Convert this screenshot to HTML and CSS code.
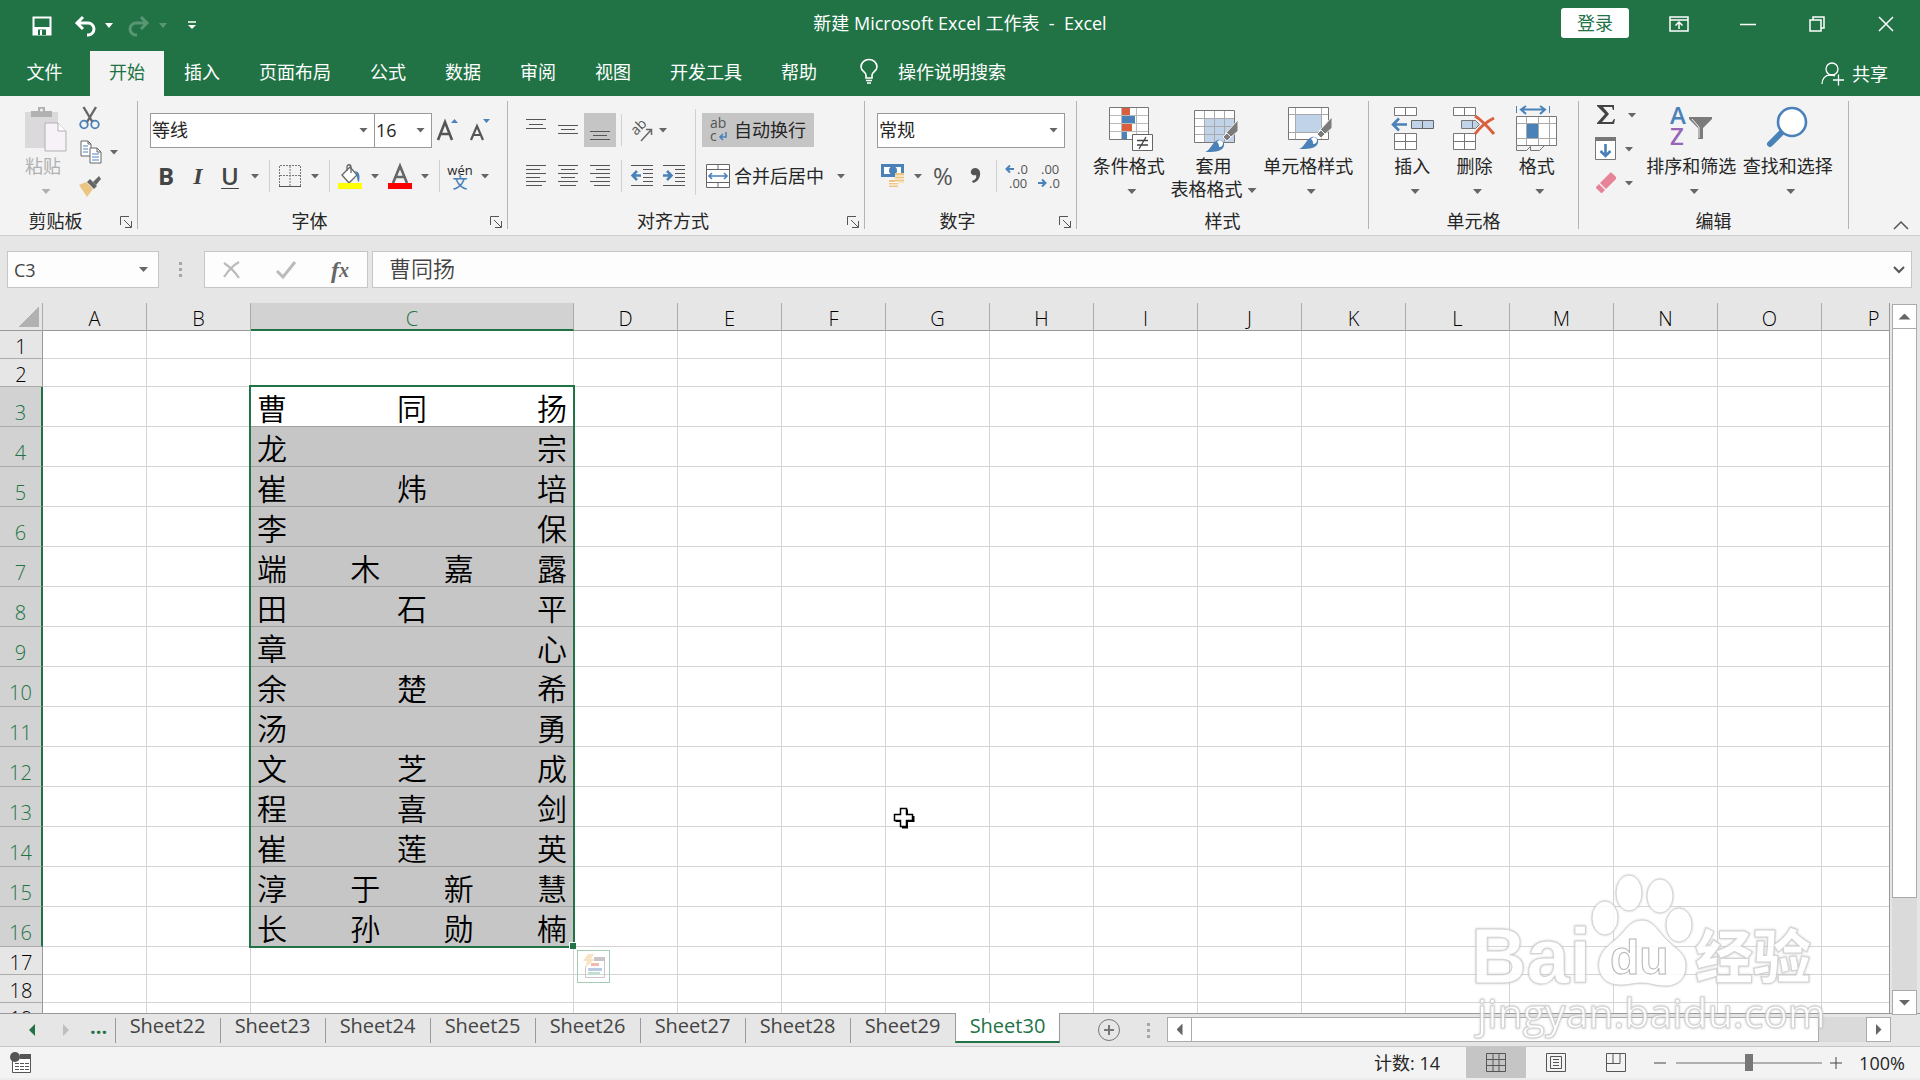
FILE: index.html
```
<!DOCTYPE html>
<html lang="zh-CN">
<head>
  <meta charset="UTF-8">
  <meta name="viewport" content="width=device-width, initial-scale=1.0">
  <title>新建 Microsoft Excel 工作表 - Excel</title>
  <link rel="stylesheet" href="styles.css">
</head>
<body>
  <header class="titlebar">
    <div class="quick">
      <button class="quick-save" aria-label="保存"><svg width="20" height="20" viewBox="0 0 20 20"><path d="M1.500 1.500h17v17h-17z" fill="none" stroke="#fff" stroke-width="2"/><path d="M1 11h18v8H1z" fill="#fff"/><path d="M6 13.500h8V19H6z" fill="#217346"/><path d="M8 14h2v5H8z" fill="#fff"/></svg></button>
      <button class="quick-undo" aria-label="撤消"><svg width="24" height="22" viewBox="0 0 24 22"><path d="M10 2L4 8l6 6M4 8h11a6 6 0 0 1 0 12h-1" fill="none" stroke="#fff" stroke-width="3"/></svg><i class="caret white"></i></button>
      <button class="quick-undo faded" aria-label="恢复"><svg width="24" height="22" viewBox="0 0 24 22"><path d="M14 2l6 6-6 6M20 8H9a6 6 0 0 0 0 12h1" fill="none" stroke="#fff" stroke-width="3"/></svg><i class="caret white"></i></button>
      <button class="quick-more" aria-label="自定义快速访问工具栏"><svg width="8" height="9" viewBox="0 0 8 9"><path d="M0 1h8" stroke="#fff" stroke-width="1.500"/><path d="M0 4h8L4 8z" fill="#fff"/></svg></button>
    </div>
    <div class="title">新建 Microsoft Excel 工作表&nbsp; -&nbsp; Excel</div>
    <div class="window-buttons">
      <button class="login">登录</button>
      <button class="win" aria-label="功能区显示选项"><svg width="20" height="16" viewBox="0 0 20 16"><path d="M1 1h18v14H1zM1 4h18M10 13V6M6.500 9.500L10 6l3.500 3.500" fill="none" stroke="#fff" stroke-width="1.500"/></svg></button>
      <button class="win" aria-label="最小化"><svg width="16" height="16" viewBox="0 0 16 16"><path d="M0 8.500h16" stroke="#fff" stroke-width="1.500"/></svg></button>
      <button class="win" aria-label="向下还原"><svg width="16" height="16" viewBox="0 0 16 16"><path d="M1 4h11v11H1zM4 4V1h11v11h-3" fill="none" stroke="#fff" stroke-width="1.500"/></svg></button>
      <button class="win" aria-label="关闭"><svg width="16" height="16" viewBox="0 0 16 16"><path d="M1 1l14 14M15 1L1 15" stroke="#fff" stroke-width="1.500"/></svg></button>
    </div>
  </header>

  <nav class="tabs">
    <button class="tab file">文件</button>
    <button class="tab active">开始</button>
    <button class="tab">插入</button>
    <button class="tab">页面布局</button>
    <button class="tab">公式</button>
    <button class="tab">数据</button>
    <button class="tab">审阅</button>
    <button class="tab">视图</button>
    <button class="tab">开发工具</button>
    <button class="tab">帮助</button>
    <button class="tab tell-me"><svg width="18" height="25" viewBox="0 0 18 25"><path d="M6 19v-3C6 13 1 12 1 8a8 7.500 0 0 1 16 0c0 4-5 5-5 8v3zM6 21.500h6M7 24h4" fill="none" stroke="#fff" stroke-width="1.600"/></svg>操作说明搜索</button>
    <button class="share"><svg width="24" height="24" viewBox="0 0 24 24"><circle cx="11" cy="7" r="6" fill="none" stroke="#fff" stroke-width="1.300"/><path d="M1 22c0-5 3-9 8-9 2 0 4 0 5 1M12 18h11M17.500 12.500v11" fill="none" stroke="#fff" stroke-width="1.300"/></svg>共享</button>
  </nav>

  <section class="ribbon">
    <div class="group clipboard">
      <div class="group-body">
        <button class="big paste"><svg width="42" height="46" viewBox="0 0 42 46"><path d="M0 6h33v36H0z" fill="#dcd9dc"/><path d="M6 11V5h7V1h7v4h7v6z" fill="#b1b1b1"/><circle cx="16.500" cy="4" r="1.500" fill="#f3f3f3"/><path d="M20 17h13l8 8v20H20z" fill="#f6f2f8" stroke="#b1b1b1"/><path d="M33 17v8h8" fill="#fff" stroke="#b1b1b1"/></svg><span>粘贴</span><i class="caret"></i></button>
        <div class="stack">
          <button class="tool" aria-label="剪切"><svg width="22" height="24" viewBox="0 0 22 24"><path d="M4.500 1l9 15M17 1L8 16" stroke="#666" stroke-width="2.400"/><circle cx="5" cy="18.500" r="3.800" fill="none" stroke="#4a81b8" stroke-width="1.800"/><circle cx="16" cy="18.500" r="3.800" fill="none" stroke="#4a81b8" stroke-width="1.800"/></svg></button>
          <button class="tool with-caret" aria-label="复制"><svg width="22" height="24" viewBox="0 0 22 24"><path d="M1 1h7l3 3v12H1zM8 1v3h3" fill="#fff" stroke="#666"/><path d="M3 6h5M3 9h5M3 12h5" stroke="#4a81b8"/><path d="M10 8h7l4 4v11H10zM17 8v4h4" fill="#fff" stroke="#666"/><path d="M12 14h7M12 17h7M12 20h7" stroke="#4a81b8"/></svg><i class="caret"></i></button>
          <button class="tool" aria-label="格式刷"><svg width="24" height="24" viewBox="0 0 24 24"><path d="M1 11l7-3 7 7-6 8z" fill="#ecc583"/><path d="M9 8l3-3 7 7-3 3z" fill="#666"/><path d="M15 8l6-6 2 3-5 6z" fill="#666"/></svg></button>
        </div>
      </div>
      <div class="group-name"><span>剪贴板</span><button class="launcher" aria-label="剪贴板设置"><svg width="12" height="12" viewBox="0 0 12 12"><path d="M.500 9V.500H9M4 4l7 7M11.500 5v6.500H5" fill="none" stroke="#555"/></svg></button></div>
    </div>

    <div class="group font">
      <div class="group-body rows">
        <div class="row">
          <label class="combo font-name"><select aria-label="字体"><option>等线</option></select><i class="caret"></i></label>
          <label class="combo font-size"><select aria-label="字号"><option>16</option></select><i class="caret"></i></label>
          <button class="tool" aria-label="增大字号"><svg width="24" height="24" viewBox="0 0 24 24"><path d="M2 22L9 4l7 18M4.500 16h9" fill="none" stroke="#555" stroke-width="2.600"/><path d="M15 5h7l-3.500-4z" fill="#4a81b8"/></svg></button>
          <button class="tool" aria-label="减小字号"><svg width="24" height="24" viewBox="0 0 24 24"><path d="M3 22L9 8l6 14M5 17h8" fill="none" stroke="#555" stroke-width="2.200"/><path d="M15 1h7l-3.500 4z" fill="#4a81b8"/></svg></button>
        </div>
        <div class="row">
          <button class="tool glyph bold">B</button>
          <button class="tool glyph italic">I</button>
          <button class="tool glyph under">U</button><button class="drop" aria-label="下划线选项"><i class="caret"></i></button>
          <i class="sep"></i>
          <button class="tool" aria-label="边框"><svg width="22" height="22" viewBox="0 0 22 22"><path d="M1 .500h20M.500 1v20M21.500 1v20M11 1v20M1 10.500h20" fill="none" stroke="#777" stroke-dasharray="2 1"/><path d="M0 21.500h22" stroke="#555"/></svg></button><button class="drop" aria-label="边框选项"><i class="caret"></i></button>
          <i class="sep"></i>
          <button class="tool" aria-label="填充颜色"><svg width="24" height="25" viewBox="0 0 24 25"><path d="M4 11l8-8 7 8-8 8z" fill="#fff" stroke="#666" stroke-width="1.300"/><path d="M9 7V3c0-3 4-3 4 0v6" fill="none" stroke="#666" stroke-width="1.300"/><path d="M17 7c5 1 5 5 4 11-2-1-2-4-2-7z" fill="#4a81b8"/><path d="M0 19h24v6H0z" fill="#ff0"/></svg></button><button class="drop" aria-label="填充颜色选项"><i class="caret"></i></button>
          <button class="tool" aria-label="字体颜色"><svg width="24" height="25" viewBox="0 0 24 25"><path d="M5 19l7-17 7 17M7.500 13h9" fill="none" stroke="#666" stroke-width="2.600"/><path d="M0 19h24v6H0z" fill="red"/></svg></button><button class="drop" aria-label="字体颜色选项"><i class="caret"></i></button>
          <i class="sep"></i>
          <button class="tool phonetic"><span>wén</span><b>文</b></button><button class="drop" aria-label="拼音选项"><i class="caret"></i></button>
        </div>
      </div>
      <div class="group-name"><span>字体</span><button class="launcher" aria-label="字体设置"><svg width="12" height="12" viewBox="0 0 12 12"><path d="M.500 9V.500H9M4 4l7 7M11.500 5v6.500H5" fill="none" stroke="#555"/></svg></button></div>
    </div>

    <div class="group align">
      <div class="group-body">
        <div class="rows">
          <div class="row">
            <button class="tool" aria-label="顶端对齐"><svg width="20" height="24" viewBox="0 0 20 24"><path d="M0 1.500h20M3 6.500h14M0 10.500h20" stroke="#555"/></svg></button>
            <button class="tool" aria-label="垂直居中"><svg width="20" height="24" viewBox="0 0 20 24"><path d="M0 7.500h20M3 11.500h14M0 15.500h20" stroke="#555"/></svg></button>
            <button class="tool pressed" aria-label="底端对齐"><svg width="20" height="24" viewBox="0 0 20 24"><path d="M0 13.500h20M3 17.500h14M0 21.500h20" stroke="#555"/></svg></button>
            <i class="sep"></i>
            <button class="tool" aria-label="方向"><svg width="24" height="24" viewBox="0 0 24 24"><text x="6" y="18" transform="rotate(-45 6 18)" class="svg-text" font-size="14">ab</text><path d="M11 23L21 12M16 11.500h5.500V17" fill="none" stroke="#666" stroke-width="1.500"/></svg></button><button class="drop near" aria-label="方向选项"><i class="caret"></i></button>
          </div>
          <div class="row">
            <button class="tool" aria-label="左对齐"><svg width="20" height="22" viewBox="0 0 20 22"><path d="M0 .500h20M0 4.500h14M0 8.500h20M0 12.500h14M0 16.500h20M0 20.500h16" stroke="#555"/></svg></button>
            <button class="tool" aria-label="居中"><svg width="20" height="22" viewBox="0 0 20 22"><path d="M0 .500h20M3 4.500h14M0 8.500h20M3 12.500h14M0 16.500h20M2 20.500h16" stroke="#555"/></svg></button>
            <button class="tool" aria-label="右对齐"><svg width="20" height="22" viewBox="0 0 20 22"><path d="M0 .500h20M6 4.500h14M0 8.500h20M6 12.500h14M0 16.500h20M4 20.500h16" stroke="#555"/></svg></button>
            <i class="sep"></i>
            <button class="tool" aria-label="减少缩进量"><svg width="22" height="22" viewBox="0 0 22 22"><path d="M0 .500h22M12 4.500h10M12 8.500h10M12 12.500h10M12 16.500h10M0 20.500h22" stroke="#555"/><path d="M10 10.500H2M6 6l-4.500 4.500L6 15" fill="none" stroke="#4a81b8" stroke-width="2.500"/></svg></button>
            <button class="tool" aria-label="增加缩进量"><svg width="22" height="22" viewBox="0 0 22 22"><path d="M0 .500h22M12 4.500h10M12 8.500h10M12 12.500h10M12 16.500h10M0 20.500h22" stroke="#555"/><path d="M0 10.500h8M4 6l4.500 4.500L4 15" fill="none" stroke="#4a81b8" stroke-width="2.500"/></svg></button>
          </div>
        </div>
        <i class="sep tall"></i>
        <div class="rows">
          <div class="row">
            <button class="wide pressed"><svg width="24" height="26" viewBox="0 0 24 26"><text x="4" y="11" class="svg-text" font-size="14">ab</text><text x="4" y="24" class="svg-text" font-size="14">c</text><path d="M20 15v5h-6M17 17l-3 3 3 3" fill="none" stroke="#4a81b8" stroke-width="1.600"/></svg>自动换行</button>
          </div>
          <div class="row">
            <button class="wide"><svg width="24" height="24" viewBox="0 0 24 24"><path d="M.500 .500h23v23H.500z" fill="#fff" stroke="#666"/><path d="M0 5.500h24M0 18.500h24M12 0v5M12 19v5" stroke="#666"/><path d="M3 12h18M6 9l-3 3 3 3M18 9l3 3-3 3" fill="none" stroke="#4a81b8" stroke-width="1.600"/></svg>合并后居中</button><button class="drop" aria-label="合并选项"><i class="caret"></i></button>
          </div>
        </div>
      </div>
      <div class="group-name"><span>对齐方式</span><button class="launcher" aria-label="对齐设置"><svg width="12" height="12" viewBox="0 0 12 12"><path d="M.500 9V.500H9M4 4l7 7M11.500 5v6.500H5" fill="none" stroke="#555"/></svg></button></div>
    </div>

    <div class="group number">
      <div class="group-body rows">
        <div class="row">
          <label class="combo format"><select aria-label="数字格式"><option>常规</option></select><i class="caret"></i></label>
        </div>
        <div class="row">
          <button class="tool" aria-label="会计数字格式"><svg width="24" height="24" viewBox="0 0 24 24"><path d="M0 0h23v13H0z" fill="#4a81b8"/><path d="M3 3h17v7H3z" fill="#fff"/><circle cx="12" cy="6.500" r="4" fill="#4a81b8"/><path d="M14 9h9v10h-9zM8 16h9v7H8z" fill="#ecc583"/><path d="M14 12h9M14 15h9M14 18h9M8 18.500h9M8 21h9" stroke="#fff"/></svg></button><button class="drop" aria-label="会计格式选项"><i class="caret"></i></button>
          <button class="tool glyph percent">%</button>
          <button class="tool" aria-label="千位分隔样式"><svg width="12" height="18" viewBox="0 0 12 18"><path d="M3 14c3-1 5-3 4-6-3 1-6-1-5-4 1-4 8-4 9 1 1 6-3 10-7 11z" fill="#555"/></svg></button>
          <i class="sep"></i>
          <button class="tool" aria-label="增加小数位数"><svg width="24" height="26" viewBox="0 0 24 26"><text x="12" y="11" class="svg-text" font-size="13">.0</text><text x="4" y="25" class="svg-text" font-size="13">.00</text><path d="M9 6H2M5 2.500L1.500 6 5 9.500" fill="none" stroke="#4a81b8" stroke-width="2"/></svg></button>
          <button class="tool" aria-label="减少小数位数"><svg width="24" height="26" viewBox="0 0 24 26"><text x="4" y="11" class="svg-text" font-size="13">.00</text><text x="12" y="25" class="svg-text" font-size="13">.0</text><path d="M1 20h7M5 16.500L8.500 20 5 23.500" fill="none" stroke="#4a81b8" stroke-width="2"/></svg></button>
        </div>
      </div>
      <div class="group-name"><span>数字</span><button class="launcher" aria-label="数字设置"><svg width="12" height="12" viewBox="0 0 12 12"><path d="M.500 9V.500H9M4 4l7 7M11.500 5v6.500H5" fill="none" stroke="#555"/></svg></button></div>
    </div>

    <div class="group styles">
      <div class="group-body">
        <button class="big"><svg width="46" height="46" viewBox="0 0 46 46"><path d="M1.500 1.500h39v32h-39z" fill="#fff" stroke="#777"/><path d="M2 9.500h38M2 17.500h38M2 25.500h38M13.500 2v31M28.500 2v31" stroke="#bbb"/><path d="M14 2h8v7h-8zM14 18h10v7H14z" fill="#d9603f"/><path d="M14 10h13v7H14zM14 26h5v7h-5z" fill="#4a81b8"/><path d="M24.500 28.500h20v16h-20z" fill="#fff" stroke="#666"/><path d="M29 34.500h11M29 39h11M38 31l-7 12" stroke="#444" stroke-width="1.300"/></svg><span>条件格式</span><i class="caret"></i></button>
        <button class="big table-format"><svg width="46" height="46" viewBox="0 0 46 46"><path d="M1.500 4.500h40v32h-40z" fill="#fff" stroke="#777"/><path d="M12 13h29v23H12z" fill="#c1d3e8"/><path d="M2 12.500h39M2 20.500h39M2 28.500h39M11.500 5v31M21.500 5v31M31.500 5v31" stroke="#aaa"/><path d="M45 14v11l-8 7-5-4z" fill="#7b7b7b" stroke="#f3f3f3"/><path d="M34 27l4 4-4 4-4-4z" fill="#7b7b7b" stroke="#f3f3f3"/><path d="M12 46c5-1 7-10 13-12 5-1 8 4 5 8-3 4-10 4-18 4z" fill="#4a81b8"/><path d="M24 36c2-3 6-2 6 1s-2 4-4 4c0-2 0-3-2-5z" fill="#fff"/></svg><span>套用</span><span class="second-line">表格格式<i class="caret"></i></span></button>
        <button class="big cell-style"><svg width="46" height="46" viewBox="0 0 46 46"><path d="M1.500 1.500h40v32h-40z" fill="#fff" stroke="#777"/><path d="M2 8.500h39M2 26.500h39M8.500 2v31M34.500 2v31" stroke="#aaa"/><path d="M9 9h25v17H9z" fill="#c1d3e8"/><path d="M45 11v11l-8 7-5-4z" fill="#7b7b7b" stroke="#f3f3f3"/><path d="M34 24l4 4-4 4-4-4z" fill="#7b7b7b" stroke="#f3f3f3"/><path d="M12 43c5-1 7-10 13-12 5-1 8 4 5 8-3 4-10 4-18 4z" fill="#4a81b8"/><path d="M24 33c2-3 6-2 6 1s-2 4-4 4c0-2 0-3-2-5z" fill="#fff"/></svg><span>单元格样式</span><i class="caret"></i></button>
      </div>
      <div class="group-name"><span>样式</span></div>
    </div>

    <div class="group cells">
      <div class="group-body">
        <button class="big"><svg width="44" height="46" viewBox="0 0 44 46"><path d="M4.500 1.500h22v8h-22zM15.500 1v8M4.500 27.500h22v16h-22zM15.500 27v16M4 35.500h22" fill="#fff" stroke="#777"/><path d="M21.500 14.500h22v8h-22zM32.500 14v8" fill="#c1d3e8" stroke="#666"/><path d="M17 18.500H3M9 12.500l-6 6 6 6" fill="none" stroke="#4a81b8" stroke-width="2.600"/></svg><span>插入</span><i class="caret"></i></button>
        <button class="big"><svg width="44" height="46" viewBox="0 0 44 46"><path d="M1.500 1.500h22v8h-22zM12.500 1v8M1.500 27.500h22v16h-22zM12.500 27v16M1 35.500h22" fill="#fff" stroke="#777"/><path d="M9.500 14.500h14l4 4-4 4h-14zM20.500 14v8" fill="#c1d3e8" stroke="#777"/><path d="M23 10c7 4 13 11 19 18M42 12c-8 4-14 9-19 16" fill="none" stroke="#d9603f" stroke-width="3"/></svg><span>删除</span><i class="caret"></i></button>
        <button class="big"><svg width="44" height="46" viewBox="0 0 44 46"><path d="M1.500 0v7M34.500 0v7" stroke="#4a81b8"/><path d="M6 3.500h24M11 0L6 3.500 11 8M25 0l5 3.500L25 8" fill="none" stroke="#4a81b8" stroke-width="2"/><path d="M1.500 10.500h40v29h-40z" fill="#fff" stroke="#777"/><path d="M2 17.500h39M2 32.500h39M11.500 11v28M23.500 11v28M34.500 11v28" stroke="#aaa"/><path d="M12 18h11v14H12z" fill="#4a81b8"/><path d="M1.500 40v4.500h10l4-4v4h9l5-5" fill="none" stroke="#777"/></svg><span>格式</span><i class="caret"></i></button>
      </div>
      <div class="group-name"><span>单元格</span></div>
    </div>

    <div class="group edit">
      <div class="group-body">
        <div class="stack">
          <button class="tool with-caret sum" aria-label="自动求和"><svg width="20" height="22" viewBox="0 0 20 22"><path d="M1 1h17v5h-1l-1-3H7l6 7-7 8h10l2-3h1l-1 5H1v-1l8-9-8-8z" fill="#444"/></svg><i class="caret"></i></button>
          <button class="tool with-caret" aria-label="填充"><svg width="22" height="24" viewBox="0 0 22 24"><path d="M.500 .500h20v22H.500z" fill="#fff" stroke="#777"/><path d="M0 0h21v4H0z" fill="#777"/><path d="M10.500 7v12M5.500 14l5 5 5-5" fill="none" stroke="#4a81b8" stroke-width="2.600"/></svg><i class="caret"></i></button>
          <button class="tool with-caret" aria-label="清除"><svg width="22" height="22" viewBox="0 0 22 22"><path d="M5 11L15 1c1-1 2 0 2 0l4 4v2L11 17z" fill="#e68397"/><path d="M4 12l6 6-3 3H6l-5-5v-1z" fill="#e68397"/></svg><i class="caret"></i></button>
        </div>
        <button class="big"><svg width="44" height="46" viewBox="0 0 44 46"><text x="1" y="18" fill="#4a81b8" class="az">A</text><text x="1" y="39" fill="#9765b8" class="az">Z</text><path d="M20 11h23v2L34 22v11h-5V22l-9-9z" fill="#7b7b7b"/><path d="M23 13l7 8v11" fill="none" stroke="#f3f3f3"/></svg><span>排序和筛选</span><i class="caret"></i></button>
        <button class="big"><svg width="44" height="46" viewBox="0 0 44 46"><path d="M15 27L4 38" stroke="#4a81b8" stroke-width="6" stroke-linecap="round"/><circle cx="26" cy="16" r="14" fill="#fff" stroke="#4a81b8" stroke-width="2.600"/></svg><span>查找和选择</span><i class="caret"></i></button>
      </div>
      <div class="group-name"><span>编辑</span></div>
    </div>
    <button class="collapse" aria-label="折叠功能区"><svg width="16" height="10" viewBox="0 0 16 10"><path d="M1 9l7-7 7 7" fill="none" stroke="#555" stroke-width="1.500"/></svg></button>
  </section>

  <section class="formula-bar">
    <div class="name-box"><input aria-label="名称框" value="C3"><i class="caret"></i></div>
    <i class="dots"></i>
    <div class="formula-buttons">
      <button aria-label="取消"><svg width="20" height="18" viewBox="0 0 20 18"><path d="M2 2c6 4 11 9 15 15M17 1C10 5 6 10 2 16" fill="none" stroke="#bbb" stroke-width="2.200"/></svg></button>
      <button aria-label="输入"><svg width="20" height="18" viewBox="0 0 20 18"><path d="M1 10l6 6L19 1" fill="none" stroke="#bbb" stroke-width="3"/></svg></button>
      <button class="fx">f<small>x</small></button>
    </div>
    <div class="formula"><input aria-label="编辑栏" value="曹同扬"><svg width="12" height="8" viewBox="0 0 12 8"><path d="M1 1l5 5 5-5" fill="none" stroke="#555" stroke-width="2"/></svg></div>
  </section>

  <main class="workspace">
    <div class="sheet">
      <table class="grid">
        <thead><tr id="columns"></tr></thead>
        <tbody id="rows"></tbody>
      </table>
      <svg class="pointer" width="22" height="22" viewBox="0 0 22 22"><path d="M9 2.500h6V9h6.500v6H15v6.500H9V15H2.500V9H9z" fill="#000"/><path d="M7.500 1.500h6v6h6v6h-6v6h-6v-6h-6v-6h6z" fill="#fff" stroke="#000" stroke-width="1.500"/></svg>
    </div>
    <div class="vscroll">
      <button aria-label="向上滚动"><i class="arrow up"></i></button>
      <div class="thumb"></div>
      <div class="track"></div>
      <button aria-label="向下滚动"><i class="arrow down"></i></button>
    </div>
  </main>

  <footer>
    <div class="sheet-bar">
      <div class="sheet-nav"><button aria-label="上一个"><i class="arrow left"></i></button><button aria-label="下一个"><i class="arrow right faint"></i></button><button class="more">...</button></div>
      <button class="sheet-tab">Sheet22</button>
      <button class="sheet-tab">Sheet23</button>
      <button class="sheet-tab">Sheet24</button>
      <button class="sheet-tab">Sheet25</button>
      <button class="sheet-tab">Sheet26</button>
      <button class="sheet-tab">Sheet27</button>
      <button class="sheet-tab">Sheet28</button>
      <button class="sheet-tab">Sheet29</button>
      <button class="sheet-tab current">Sheet30</button>
      <button class="add-sheet" aria-label="新工作表"><svg width="24" height="24" viewBox="0 0 24 24"><circle cx="12" cy="12" r="10.500" fill="none" stroke="#777"/><path d="M7 12h10M12 7v10" stroke="#777" stroke-width="2"/></svg></button>
      <i class="dots"></i>
      <div class="hscroll">
        <button aria-label="向左滚动"><i class="arrow left"></i></button>
        <div class="thumb"></div>
        <div class="track"></div>
        <button aria-label="向右滚动"><i class="arrow right"></i></button>
      </div>
    </div>
    <div class="status-bar">
      <button class="record" aria-label="录制宏"><svg width="22" height="22" viewBox="0 0 22 22"><path d="M2.500 8v12.500h18V3" fill="#fff" stroke="#555"/><path d="M10 2h11v5H10z" fill="#555"/><circle cx="5" cy="5" r="5" fill="#555"/><path d="M5 11.500h14M5 14.500h14M5 17.500h14" stroke="#555" stroke-dasharray="4 1"/></svg></button>
      <span class="count">计数: 14</span>
      <button class="view pressed" aria-label="普通"><svg width="20" height="20" viewBox="0 0 20 20"><path d="M.500 .500h19v18H.500zM7 0v19M13 0v19M0 6.500h20M0 12.500h20" fill="none" stroke="#555"/></svg></button>
      <button class="view" aria-label="页面布局"><svg width="20" height="20" viewBox="0 0 20 20"><path d="M.500 .500h19v18H.500zM4.500 3.500h11v12h-11zM7 6.500h6M7 9.500h6M7 12.500h6" fill="none" stroke="#555"/></svg></button>
      <button class="view" aria-label="分页预览"><svg width="20" height="20" viewBox="0 0 20 20"><path d="M.500 .500h19v18H.500zM0 10.500h14V0M7 0v10" fill="none" stroke="#555"/></svg></button>
      <button class="zoom-step" aria-label="缩小"><svg width="12" height="12" viewBox="0 0 12 12"><path d="M0 6h12" stroke="#444"/></svg></button>
      <input class="zoom" type="range" aria-label="显示比例" min="0" max="100" value="50">
      <button class="zoom-step" aria-label="放大"><svg width="12" height="12" viewBox="0 0 12 12"><path d="M0 6h12M6 0v12" stroke="#444"/></svg></button>
      <button class="percent-label">100%</button>
    </div>
  </footer>

  <svg class="watermark" width="360" height="176" viewBox="0 0 360 176">
    <g class="mark">
      <text x="1" y="113" class="mark-latin">Bai</text>
      <ellipse cx="135" cy="48" rx="13" ry="17"/>
      <ellipse cx="159" cy="23" rx="13" ry="18"/>
      <ellipse cx="190" cy="26" rx="13" ry="17"/>
      <ellipse cx="209" cy="55" rx="13" ry="17"/>
      <path d="M150 115c-17 0-23-13-21-24 2-11 10-16 17-22 9-7 13-19 26-19 12 0 17 13 26 21 8 8 18 12 18 25 0 12-8 20-20 20-13 0-14-3-24-3-9 0-12 2-22 2z"/>
      <text x="140" y="104" class="mark-du">du</text>
      <text x="225" y="108" class="mark-cjk">经验</text>
      <text x="7" y="158" class="mark-url">jingyan.baidu.com</text>
    </g>
  </svg>

  <script>
    const names = ['曹同扬', '龙宗', '崔炜培', '李保', '端木嘉露', '田石平', '章心', '余楚希', '汤勇', '文芝成', '程喜剑', '崔莲英', '淳于新慧', '长孙勋楠'];
    const firstRow = 3;
    const letters = 'ABCDEFGHIJKLMNOP'.split('');

    document.getElementById('columns').innerHTML = '<th class="corner"></th>' +
      letters.map(l => `<th class="${l === 'C' ? 'wide-col selected' : ''}">${l}</th>`).join('');

    let html = '';
    for (let r = 1; r <= 19; r++) {
      const name = names[r - firstRow];
      html += `<tr class="${name ? 'filled' : ''}"><th>${r}</th>`;
      letters.forEach(l => {
        if (l !== 'C' || !name) {
          html += '<td></td>';
          return;
        }
        const chars = name.split('').map(c => `<span>${c}</span>`).join('');
        // the selection frame hangs off the first selected cell
        const frame = r === firstRow ? '<div class="selection"><i class="handle"></i><button class="quick-analysis" aria-label="快速分析"><svg width="24" height="26" viewBox="0 0 24 26"><path d="M3.500 12v11.500h19V4" fill="none" stroke="#c8c4c8"/><path d="M12 3h11v4H12z" fill="#c8c4c8"/><path d="M9 9h8v3H9z" fill="#efbcaf"/><path d="M6 14h14v3H6z" fill="#b7cbe2"/><path d="M6 18h12v3H6z" fill="#c3ddcf"/><path d="M6 0h6L9 5h4L3 14l2-7H1z" fill="#f8e3c4"/></svg></button></div>' : '';
        html += `<td class="${r === firstRow ? 'first' : 'picked'}"><div class="spread">${chars}</div>${frame}</td>`;
      });
      html += '</tr>';
    }
    document.getElementById('rows').innerHTML = html;
  </script>
</body>
</html>
```
FILE: styles.css
```
:root {
  --green: #217346;
  --ribbon: #f3f3f3;
  --panel: #e6e6e6;
  --line: #d4d4d4;
  --edge: #ababab;
  --pressed: #c5c5c5;
}

* {
  box-sizing: border-box;
}

body {
  margin: 0;
  height: 100vh;
  display: flex;
  flex-direction: column;
  overflow: hidden;
  background: #fff;
  color: #262626;
  font-family: "Open Sans", "Noto Sans CJK SC", sans-serif;
  font-size: 18px;
  line-height: 24px;
}

button, input, select {
  font: inherit;
  color: inherit;
  background: none;
  border: none;
  border-radius: 0;
  padding: 0;
  margin: 0;
}

button {
  display: flex;
  align-items: center;
  justify-content: center;
  flex: none;
  white-space: nowrap;
}

svg {
  display: block;
  flex: none;
  overflow: visible;
}

.caret {
  flex: none;
  width: 9px;
  height: 5px;
  background: #666;
  clip-path: polygon(0 0, 100% 0, 50% 100%);
}

.caret.white {
  width: 8px;
  background: #fff;
}

/* title bar */
.titlebar {
  display: flex;
  height: 51px;
  background: var(--green);
  color: #fff;
}

.quick {
  flex: 1;
  display: flex;
  align-items: center;
}

.quick-save {
  width: 20px;
  margin: 0 21px 0 32px;
}

.quick-undo {
  gap: 8px;
  width: 40px;
  margin-right: 14px;
}

.faded {
  opacity: .25;
}

.quick-more {
  margin-left: 7px;
}

.title {
  padding-top: 11px;
}

.window-buttons {
  flex: 1;
  display: flex;
  justify-content: flex-end;
}

.login {
  width: 68px;
  height: 30px;
  margin: 8px 15px 0 0;
  background: #fff;
  border-radius: 3px;
  color: var(--green);
}

.win {
  width: 69px;
  height: 47px;
}

/* ribbon tabs */
.tabs {
  display: flex;
  height: 45px;
  background: var(--green);
  color: #fff;
}

.tab {
  padding: 0 19px 4px;
  margin-right: 1px;
}

.file {
  width: 89px;
}

.tab.active {
  background: var(--ribbon);
  color: var(--green);
}

.tell-me {
  gap: 20px;
  padding-left: 23px;
}

.share {
  gap: 7px;
  margin: 0 32px 0 auto;
}

/* ribbon */
.ribbon {
  display: flex;
  height: 140px;
  padding-top: 5px;
  background: var(--ribbon);
  border-bottom: 1px solid #cfcfcf;
}

.group {
  display: flex;
  flex-direction: column;
  flex: none;
  height: 128px;
  padding-left: 12px;
  border-right: 1px solid #b4b4b4;
}

.group-body {
  display: flex;
  flex: none;
  height: 108px;
}

.group-name {
  display: flex;
  flex: none;
  align-items: center;
  justify-content: center;
  height: 24px;
  margin-left: -12px;
}

.group-name span {
  flex: 1;
  text-align: center;
}

.launcher {
  justify-content: flex-end;
  width: 26px;
  padding: 2px 5px 0 0;
}

.clipboard { width: 138px; }
.font { width: 370px; }
.align { width: 357px; }
.number { width: 212px; }
.styles { width: 292px; }
.cells { width: 210px; }
.edit { width: 270px; }

.rows {
  display: flex;
  flex-direction: column;
}

.row {
  display: flex;
  align-items: center;
  height: 34px;
  margin: 12px 0 0;
}

.tool {
  width: 32px;
  height: 34px;
}

.drop {
  width: 18px;
  height: 34px;
}

.near {
  width: 10px;
}

.pressed {
  background: var(--pressed);
}

.sep {
  width: 1px;
  height: 32px;
  margin: 0 4px 0 5px;
  background: #d0d0d0;
}

.sep.tall {
  height: 86px;
  margin: 8px 6px 0 5px;
}

.combo {
  display: flex;
  align-items: center;
  height: 35px;
  background: #fff;
  border: 1px solid #999;
  padding-right: 6px;
}

.combo select {
  flex: 1;
  height: 33px;
  padding-left: 1px;
  appearance: none;
}

.font-name {
  width: 225px;
}

.font-size {
  width: 58px;
  margin-left: -1px;
}

.format {
  width: 188px;
}

.glyph {
  font-size: 24px;
  color: #444;
}

.bold {
  font-weight: 700;
}

.italic {
  font-family: "Liberation Serif", serif;
  font-style: italic;
  font-weight: 700;
}

.under {
  font-weight: 600;
  text-decoration: underline;
  text-decoration-thickness: 1px;
  text-underline-offset: 3px;
}

.percent {
  font-size: 24px;
  color: #555;
}

.phonetic {
  flex-direction: column;
  font-size: 13px;
  line-height: 12px;
}

.phonetic b {
  font-size: 15px;
  font-weight: 500;
  color: #4a81b8;
}

.wide {
  gap: 4px;
  height: 34px;
  padding: 0 8px 0 4px;
}

.svg-text {
  font-family: "Open Sans", sans-serif;
  fill: #555;
}

.az {
  font-family: "Open Sans", sans-serif;
  font-weight: 600;
  font-size: 24px;
}

.big {
  flex-direction: column;
  justify-content: flex-start;
  flex: 1;
  padding-top: 5px;
  line-height: 23px;
}

.big span {
  margin-top: 3px;
}

.big .caret {
  margin: 11px 0 0 6px;
}

.styles .group-body,
.cells .group-body {
  padding-right: 10px;
}

.styles .big {
  flex: 80;
}

.styles .table-format {
  flex: 90;
}

.styles .cell-style {
  flex: 100;
}

.styles svg {
  margin-left: 4px;
}

.table-format .second-line {
  display: flex;
  align-items: center;
  margin-top: 0;
}

.table-format .caret {
  margin: 2px 0 0 5px;
}

.paste {
  color: #b0b0b0;
}

.paste svg {
  margin-left: 6px;
}

.paste .caret {
  background: #b0b0b0;
}

.clipboard .big {
  flex: none;
  width: 62px;
}

.stack {
  display: flex;
  flex-direction: column;
  align-items: flex-start;
  flex: none;
  width: 52px;
}

.with-caret {
  width: 46px;
  gap: 8px;
  padding-left: 4px;
}

.sum {
  width: 50px;
  gap: 12px;
}

.edit .stack {
  margin: -3px 2px 0 -2px;
}

.edit .group-body {
  padding-right: 12px;
}

.collapse {
  align-self: flex-end;
  margin: 0 11px 5px auto;
}

/* formula bar */
.formula-bar {
  display: flex;
  height: 67px;
  padding: 15px 8px 15px 7px;
  background: var(--panel);
}

.name-box, .formula-buttons, .formula {
  display: flex;
  align-items: center;
  background: #fdfdfd;
  border: 1px solid #c6c6c6;
}

.name-box {
  width: 152px;
  padding: 0 10px 0 6px;
}

.name-box input, .formula input {
  flex: 1;
  min-width: 0;
  color: #444;
}

.dots {
  align-self: center;
  width: 3px;
  height: 15px;
  margin: 0 22px 0 20px;
  background: repeating-linear-gradient(#a6a6a6 0 3px, transparent 3px 6px);
}

.formula-buttons {
  width: 164px;
  margin-right: 4px;
}

.formula-buttons button {
  width: 54px;
  height: 34px;
}

.fx {
  font-family: "Liberation Serif", serif;
  font-style: italic;
  font-weight: 700;
  font-size: 24px;
  color: #666;
}

.fx small {
  font-size: 20px;
}

.formula {
  flex: 1;
  padding: 0 6px 0 16px;
}

.formula input {
  padding-bottom: 4px;
  font-size: 22px;
  font-weight: 350;
}

/* worksheet */
.workspace {
  flex: 1;
  display: flex;
  min-height: 0;
  background: var(--panel);
}

.sheet {
  position: relative;
  flex: 1;
  overflow: hidden;
  background: #fff;
  border-right: 1px solid #999;
}

.grid {
  table-layout: fixed;
  width: 1926px;
  border-collapse: separate;
  border-spacing: 0;
  font-size: 20px;
  line-height: 20px;
}

.grid th {
  height: 28px;
  padding: 5px 0 0;
  font-weight: 350;
  color: #000;
  background: var(--panel);
  border-right: 1px solid var(--edge);
  border-bottom: 1px solid #999;
}

.grid tbody th {
  padding: 4px 0 0;
  border-bottom-color: var(--edge);
  border-right-color: #999;
}

.grid .corner {
  width: 43px;
  background: linear-gradient(135deg, transparent 50%, #b1b1b1 50%) 19px 4px / 20px 20px no-repeat var(--panel);
}

.grid thead .wide-col {
  width: 323px;
}

.grid thead .selected {
  color: var(--green);
  background: #d2d2d2;
  border-bottom: 2px solid var(--green);
}

.grid td {
  padding: 0;
  border-right: 1px solid var(--line);
  border-bottom: 1px solid var(--line);
}

.grid .filled th {
  height: 40px;
  padding-top: 12px;
  color: var(--green);
  background: #d2d2d2;
  border-right: 2px solid var(--green);
}

.grid .first {
  position: relative;
  border-bottom-color: #a0a0a0;
}

.grid .picked {
  background: #c6c6c6;
  border-bottom-color: #a0a0a0;
}

.spread {
  display: flex;
  justify-content: space-between;
  padding: 5px 6px 0;
  font-size: 30px;
  line-height: 34px;
  font-weight: 350;
  color: #000;
}

.selection {
  position: absolute;
  z-index: 1;
  top: -2px;
  left: -2px;
  right: -2px;
  height: 563px;
  border: 2px solid var(--green);
}

.handle {
  position: absolute;
  right: -3px;
  bottom: -3px;
  width: 7px;
  height: 7px;
  background: var(--green);
  border: solid #fff;
  border-width: 1px 0 0 1px;
}

.quick-analysis {
  position: absolute;
  left: 326px;
  top: 563px;
  width: 33px;
  height: 33px;
  border: 1px solid #a5cbb7;
}

.pointer {
  position: absolute;
  left: 893px;
  top: 504px;
}

.vscroll {
  display: flex;
  flex-direction: column;
  width: 30px;
  padding: 1px 3px 0 2px;
  margin-bottom: -2px;
  z-index: 1;
}

.vscroll button, .hscroll button {
  width: 25px;
  height: 25px;
  background: #fff;
  border: 1px solid var(--edge);
}

.thumb {
  flex: 86;
  background: #fff;
  border: 1px solid var(--edge);
}

.vscroll .thumb {
  border-top: none;
}

.track {
  flex: 14;
  background: #dadada;
}

.arrow {
  width: 6px;
  height: 12px;
  background: #666;
}

.left {
  clip-path: polygon(100% 0, 100% 100%, 0 50%);
}

.right {
  clip-path: polygon(0 0, 100% 50%, 0 100%);
}

.up, .down {
  width: 12px;
  height: 6px;
}

.up {
  clip-path: polygon(0 100%, 50% 0, 100% 100%);
}

.down {
  clip-path: polygon(0 0, 100% 0, 50% 100%);
}

.faint {
  opacity: .3;
}

/* sheet tabs */
.sheet-bar {
  display: flex;
  height: 33px;
  background: var(--panel);
  border-top: 1px solid #999;
}

.sheet-nav {
  display: flex;
  align-items: center;
  width: 115px;
  padding-left: 29px;
}

.sheet-nav .left {
  background: var(--green);
}

.sheet-nav .faint {
  margin-left: 28px;
}

.more {
  margin: 0 0 6px 21px;
  color: var(--green);
  font-size: 20px;
  font-weight: 700;
}

.sheet-tab {
  width: 105px;
  height: 29px;
  padding-bottom: 5px;
  font-size: 20px;
  color: #444;
  background: linear-gradient(#999, #999) 0 4px / 1px 25px no-repeat;
}

.sheet-tab.current {
  height: 30px;
  margin-top: -1px;
  padding-bottom: 2px;
  color: var(--green);
  font-weight: 500;
  background: #fff;
  border: solid #999;
  border-width: 0 1px;
  border-bottom: 2px solid var(--green);
}

.add-sheet {
  margin: 0 0 0 37px;
}

.sheet-bar .dots {
  margin-left: 26px;
  margin-right: 17px;
}

.hscroll {
  flex: 1;
  display: flex;
  height: 25px;
  margin: 3px 29px 0 0;
}

.hscroll .thumb {
  flex: 93;
  border-left: none;
}

.hscroll .track {
  flex: 7;
}

/* status bar */
.status-bar {
  display: flex;
  align-items: center;
  height: 34px;
  background: var(--ribbon);
  border-top: 1px solid #c6c6c6;
  border-bottom: 2px solid #ececec;
}

.record {
  margin-left: 10px;
}

.count {
  margin: 0 26px 0 auto;
}

.view {
  width: 60px;
  height: 31px;
}

.zoom-step {
  width: 12px;
  margin: 0 10px 0 8px;
}

.zoom {
  width: 146px;
  height: 18px;
  appearance: none;
  background: linear-gradient(#b0b0b0, #b0b0b0) center / 100% 2px no-repeat;
}

.zoom::-webkit-slider-thumb {
  appearance: none;
  width: 8px;
  height: 17px;
  background: #777;
}

.percent-label {
  width: 60px;
  margin-right: 8px;
}

.watermark {
  position: absolute;
  right: 90px;
  bottom: 34px;
  z-index: 5;
  pointer-events: none;
}

.mark {
  fill: #fff;
  stroke: #ccc;
  stroke-width: 1px;
  opacity: .85;
  filter: drop-shadow(0 0 1px #bbb);
}

.mark-latin {
  font: 700 77px "Liberation Sans", sans-serif;
}

.mark-du {
  font: 700 48px "Liberation Sans", sans-serif;
  stroke: #aaa;
}

.mark-cjk {
  font: 900 58px "Noto Sans CJK SC", sans-serif;
}

.mark-url {
  font: 400 41px "Open Sans", sans-serif;
}
```
